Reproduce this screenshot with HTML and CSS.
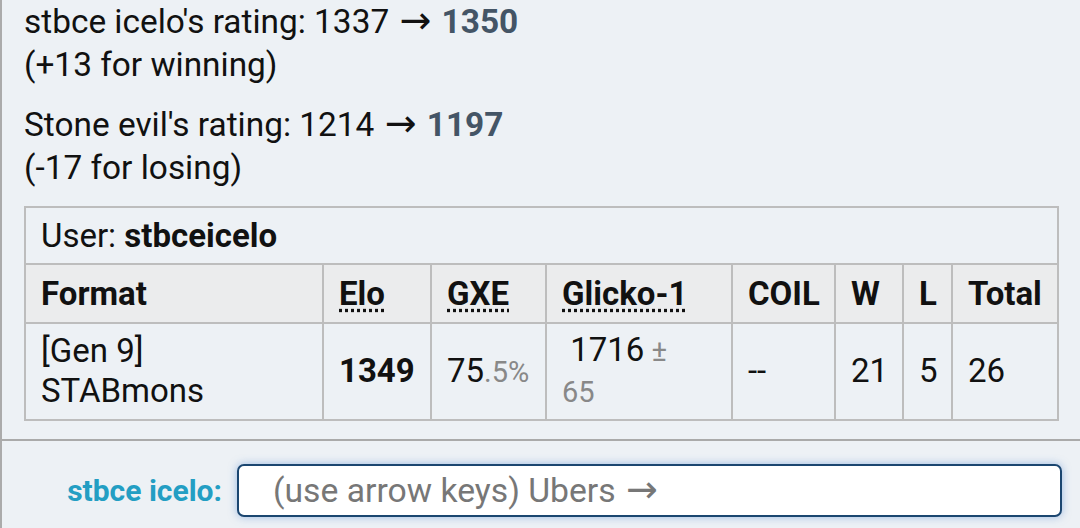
FILE: index.html
```html
<!DOCTYPE html>
<html>
<head>
<meta charset="utf-8">
<link rel="stylesheet" href="styles.css">
</head>
<body>
<div class="room">
  <div class="log">
    <p class="rating">stbce icelo's rating: 1337 <span class="arr">&rarr;</span> <strong>1350</strong><br>(+13 for winning)</p>
    <p class="rating">Stone evil's rating: 1214 <span class="arr">&rarr;</span> <strong>1197</strong><br>(-17 for losing)</p>
    <table class="ladder">
      <colgroup>
        <col class="c-format"><col class="c-elo"><col class="c-gxe"><col class="c-glicko"><col class="c-coil"><col class="c-w"><col class="c-l"><col class="c-total">
      </colgroup>
      <tr class="user-row"><td colspan="8">User: <strong>stbceicelo</strong></td></tr>
      <tr class="head-row">
        <th>Format</th>
        <th><abbr>Elo</abbr></th>
        <th><abbr>GXE</abbr></th>
        <th><abbr>Glicko-1</abbr></th>
        <th>COIL</th>
        <th>W</th>
        <th>L</th>
        <th>Total</th>
      </tr>
      <tr class="data-row">
        <td>[Gen 9]<br>STABmons</td>
        <td><strong>1349</strong></td>
        <td>75<small>.5%</small></td>
        <td>&nbsp;1716<small> &plusmn;<br>65</small></td>
        <td>--</td>
        <td>21</td>
        <td>5</td>
        <td>26</td>
      </tr>
    </table>
  </div>
  <div class="compose">
    <label class="who">stbce icelo:</label>
    <div class="textbox"><span class="placeholder">(use arrow keys) Ubers <span class="arr">&rarr;</span></span></div>
  </div>
</div>
</body>
</html>
```
FILE: styles.css
```css
html, body {
  margin: 0;
  padding: 0;
  height: 100%;
  background: #edf1f5;
  font-family: Roboto, "Noto Sans", sans-serif;
  color: #111;
}
.room {
  border-left: 2px solid #ababab;
  height: 528px;
  box-sizing: border-box;
  display: flex;
  flex-direction: column;
}
.log {
  padding: 0 22px 0 22px;
  height: 441px;
  box-sizing: border-box;
  border-bottom: 2px solid #aaaaaa;
}
.rating {
  margin: 0 0 17px 0;
  font-size: 33.4px;
  line-height: 43px;
}
.rating strong {
  color: #445566;
}
.arr {
  font-family: "DejaVu Sans", sans-serif;
  font-size: 38px;
  font-weight: normal;
  line-height: 0;
  margin: 0 2px;
}
.ladder {
  margin-top: 0;
  table-layout: fixed;
  border-collapse: collapse;
  width: 1033px;
  font-size: 33px;
  line-height: 40px;
}
.ladder td, .ladder th {
  border: 2px solid #bdbdbd;
  padding: 8px 15px;
  text-align: left;
  vertical-align: middle;
}
.ladder th {
  background: #ebeced;
  font-weight: bold;
}
.user-row td {
  height: 40px;
  padding-top: 8px;
  padding-bottom: 7px;
}
.head-row th {
  height: 41px;
}
.data-row td {
  height: 80px;
  padding-top: 6px;
  padding-bottom: 7px;
}
.ladder abbr {
  text-decoration: underline dotted;
  text-underline-offset: 4px;
}
.ladder small {
  font-size: 29px;
  color: #888;
}
.c-format { width: 298px; }
.c-elo { width: 108px; }
.c-gxe { width: 115px; }
.c-glicko { width: 186px; }
.c-coil { width: 103px; }
.c-w { width: 68px; }
.c-l { width: 49px; }
.c-total { width: 106px; }
.compose {
  display: flex;
  align-items: center;
  gap: 15px;
  padding: 23px 18px 0 0;
}
.who {
  width: 220px;
  flex: none;
  text-align: right;
  font-size: 30px;
  font-weight: bold;
  color: #239ec3;
}
.textbox {
  flex: 1;
  height: 53px;
  box-sizing: border-box;
  border: 2px solid #1b4670;
  border-radius: 7px;
  background: #fff;
  box-shadow: 0 0 9px rgba(90, 140, 210, 0.55);
  padding: 0 0 0 34px;
  display: flex;
  align-items: center;
  font-size: 33.7px;
  line-height: 40px;
}
.placeholder {
  color: #777;
  white-space: nowrap;
}
```
